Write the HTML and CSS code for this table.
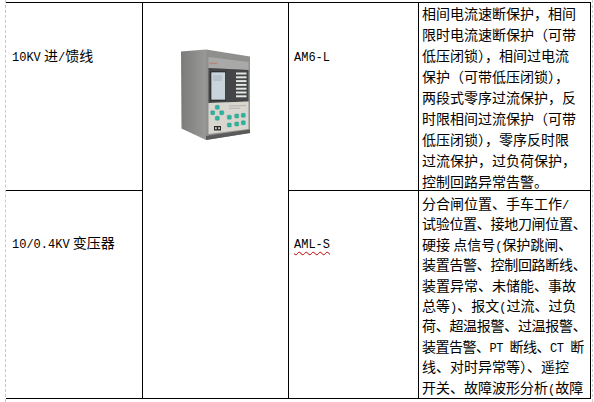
FILE: index.html
```html
<!DOCTYPE html>
<html lang="zh-CN">
<head>
<meta charset="utf-8">
<title>保护装置选型</title>
<link rel="stylesheet" href="styles.css">
</head>
<body>
<div class="page">
  <div class="grid">
    <div class="cell name r1"><span class="lat">10KV</span> 进<span class="lat">/</span>馈线</div>
    <div class="cell pic">
      <svg class="device" width="74" height="94" viewBox="179 48 74 94" xmlns="http://www.w3.org/2000/svg">
        <defs>
          <linearGradient id="side" x1="0" y1="0" x2="1" y2="0">
            <stop offset="0" stop-color="#7b7b79"/>
            <stop offset="1" stop-color="#999997"/>
          </linearGradient>
        </defs>
        <polygon points="181,51.5 206,49.5 206,140 181.5,128.5" fill="url(#side)"/>
        <polygon points="206,49.5 250,56.5 250,133 206,140" fill="#8f8f8d"/>
        <polygon points="208.5,57 248.5,62 248.5,70 208.5,68" fill="#a9a9a7"/>
        <rect x="209.5" y="62.5" width="8" height="1.6" fill="#b48a80"/>
        <polygon points="208.5,68 248.5,70 248.5,101.5 208.5,103" fill="#434546"/>
        <rect x="210.5" y="71.5" width="15.5" height="29" fill="#1d1f20"/>
        <rect x="211.3" y="72.3" width="13.9" height="27.4" fill="#c9d3dc"/>
        <rect x="213" y="75" width="9" height="6" fill="#b7c2cc"/>
        <g fill="#e4e4e2">
          <rect x="236" y="72.5" width="10.5" height="2"/>
          <rect x="236" y="76.3" width="10.5" height="2"/>
          <rect x="236" y="80.1" width="10.5" height="2"/>
          <rect x="236" y="83.9" width="10.5" height="2"/>
          <rect x="236" y="87.7" width="10.5" height="2"/>
          <rect x="236" y="91.5" width="10.5" height="2"/>
          <rect x="236" y="95.3" width="10.5" height="2"/>
        </g>
        <polygon points="208.5,103 248.5,101.5 248.5,129 208.5,134" fill="#d8d6ce"/>
        <g stroke="#9a9a96" stroke-width="0.6">
          <line x1="229" y1="106" x2="246" y2="105.6"/>
          <line x1="229" y1="108.4" x2="240" y2="108.2"/>
        </g>
        <g fill="#2db39f" stroke="#1f8576" stroke-width="0.3">
          <rect x="215.3" y="105.3" width="4" height="4" rx="0.8"/>
          <rect x="210.7" y="110.7" width="4" height="4" rx="0.8"/>
          <rect x="219.7" y="110.7" width="4" height="4" rx="0.8"/>
          <rect x="215.3" y="116.3" width="4" height="4" rx="0.8"/>
          <rect x="227.3" y="115.3" width="4" height="4" rx="0.8"/>
          <rect x="234.7" y="114" width="4" height="4" rx="0.8"/>
          <rect x="241.3" y="113.3" width="4" height="4" rx="0.8"/>
          <rect x="227.3" y="123" width="4" height="4" rx="0.8"/>
          <rect x="234.7" y="122" width="4" height="4" rx="0.8"/>
          <rect x="241.3" y="120.7" width="4" height="4" rx="0.8"/>
        </g>
        <rect x="214" y="126" width="7" height="4.5" fill="#2a2a2a"/>
        <rect x="215" y="127.2" width="1.8" height="2" fill="#cfcfcf"/>
        <rect x="218.2" y="127.2" width="1.8" height="2" fill="#cfcfcf"/>
        <polygon points="206,136 250,129.5 250,133 206,140" fill="#5a5a5a"/>
      </svg>
    </div>
    <div class="cell model r1"><span class="lat">AM6-L</span></div>
    <div class="cell desc r1">
      <div class="ln">相间电流速断保护，相间</div>
      <div class="ln">限时电流速断保护（可带</div>
      <div class="ln">低压闭锁），相间过电流</div>
      <div class="ln">保护（可带低压闭锁），</div>
      <div class="ln">两段式零序过流保护，反</div>
      <div class="ln">时限相间过流保护（可带</div>
      <div class="ln">低压闭锁），零序反时限</div>
      <div class="ln">过流保护，过负荷保护，</div>
      <div class="ln">控制回路异常告警。</div>
    </div>
    <div class="cell name r2"><span class="lat">10/0.4KV</span> 变压器</div>
    <div class="cell model r2"><span class="lat spell">AML-S</span></div>
    <div class="cell desc r2">
      <div class="ln">分合闸位置、手车工作<span class="lat">/</span></div>
      <div class="ln tight">试验位置、接地刀闸位置、</div>
      <div class="ln">硬接 点信号<span class="lat">(</span>保护跳闸、</div>
      <div class="ln tight">装置告警、控制回路断线、</div>
      <div class="ln">装置异常、未储能、事故</div>
      <div class="ln">总等<span class="lat">)</span>、报文<span class="lat">(</span>过流、过负</div>
      <div class="ln tight">荷、超温报警、过温报警、</div>
      <div class="ln tighter">装置告警、<span class="lat">PT </span>断线、<span class="lat">CT </span>断</div>
      <div class="ln">线、对时异常等）、遥控</div>
      <div class="ln">开关、故障波形分析<span class="lat">(</span>故障</div>
    </div>
  </div>
</div>
</body>
</html>
```

FILE: styles.css
```css
html, body {
  margin: 0;
  padding: 0;
  background: #ffffff;
}

body {
  font-family: "Noto Sans CJK SC", "Noto Sans", sans-serif;
  font-size: 14px;
  color: #000000;
}

.page {
  box-sizing: border-box;
  margin-left: 5px;
  width: 588px;
  height: 402px;
  padding-top: 2px;
  padding-right: 1px;
  border-left: 1px dashed #c8c8c8;
  border-right: 1px dashed #d0d0d0;
  overflow: hidden;
}

.grid {
  display: grid;
  grid-template-columns: 137px 146px 130px 172px;
  grid-template-rows: 188px 208px;
  border-top: 1px solid #000000;
}

.cell {
  box-sizing: border-box;
  border-right: 1px solid #000000;
  border-bottom: 1px solid #000000;
  overflow: hidden;
}

.lat {
  font-family: "Liberation Mono", monospace;
  font-size: 12px;
  line-height: 1;
}

.name,
.model {
  white-space: nowrap;
}

.name {
  padding-left: 6px;
}

.model {
  padding-left: 5px;
}

.r1 {
  line-height: 21px;
}

.r2 {
  line-height: 20.4px;
}

.name.r1,
.model.r1 {
  padding-top: 42px;
}

.name.r2,
.model.r2 {
  padding-top: 40.8px;
}

.pic {
  grid-row: 1 / span 2;
  grid-column: 2;
  padding-top: 45px;
  padding-left: 36px;
}

.device {
  display: block;
}

.desc {
  padding-left: 3px;
}

.desc.r2 {
  padding-top: 2px;
}

.ln {
  white-space: nowrap;
  overflow: visible;
}

.r1 .ln {
  height: 21px;
}

.r2 .ln {
  height: 20.4px;
}

.tight {
  letter-spacing: -0.3px;
}

.tighter {
  letter-spacing: -0.5px;
}

.spell {
  text-decoration: underline wavy #c00000;
  text-decoration-thickness: 1px;
  text-underline-offset: 3px;
}
```
